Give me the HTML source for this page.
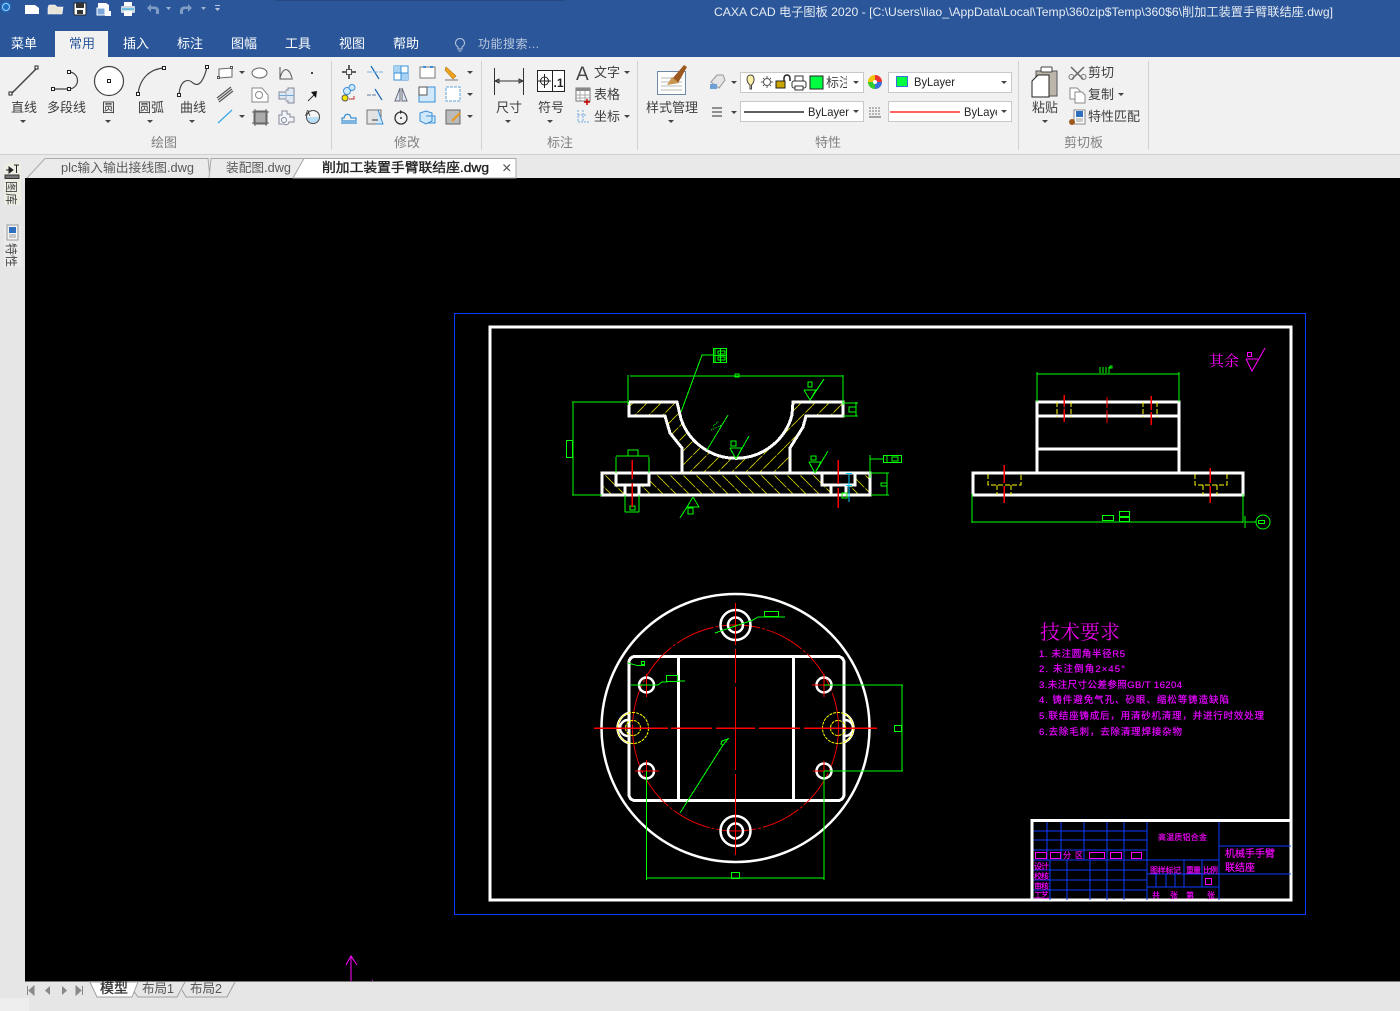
<!DOCTYPE html>
<html lang="zh"><head><meta charset="utf-8"><title>CAXA CAD</title>
<style>
html,body{margin:0;padding:0;width:1400px;height:1011px;overflow:hidden;background:#e6e6e6}
svg{display:block}
text{font-family:"Liberation Sans","Noto Sans CJK SC",sans-serif}
.r{font-size:13px;fill:#3e3e3e}
.g{font-size:13px;fill:#808080}
.m{font-size:13px;fill:#fff}
.t{font-size:12.5px;fill:#5a5a5a}
.w{fill:none;stroke:#fff;stroke-width:3;shape-rendering:crispEdges}
.gr{fill:none;stroke:#0f0;stroke-width:1;shape-rendering:crispEdges}
.red{fill:none;stroke:#f00;stroke-width:1.5;shape-rendering:crispEdges}
.y{fill:none;stroke:#ff0;stroke-width:1;stroke-dasharray:5 2;shape-rendering:crispEdges}
.mg{fill:#f0f;font-size:8px;stroke:#e000f0;stroke-width:.2}
.mt{fill:#f0f;font-size:9.5px;stroke:#c000f0;stroke-width:.25}
.mb{fill:none;stroke:#f0f;stroke-width:1.2;shape-rendering:crispEdges}
.bl{stroke:#0a3cff;stroke-width:1;fill:none;shape-rendering:crispEdges}
.ic{fill:none;stroke:#555;stroke-width:1}
.ib{fill:none;stroke:#3a8fd6;stroke-width:1.2}
</style></head><body>
<svg width="1400" height="1011" viewBox="0 0 1400 1011" xmlns="http://www.w3.org/2000/svg">
<defs>
<path id="d" d="M-3 0H3L0 3Z" fill="#444"/>
<pattern id="h1" width="14" height="14" patternUnits="userSpaceOnUse"><path d="M0 14L14 0" stroke="#d8d800" stroke-width=".8" stroke-dasharray="9 1.500"/></pattern>
<pattern id="h2" width="13" height="13" patternUnits="userSpaceOnUse"><path d="M0 0L13 13" stroke="#d8d800" stroke-width=".8" stroke-dasharray="9 1.500"/></pattern>
</defs>
<!-- backgrounds -->
<rect width="1400" height="1011" fill="#e6e6e6"/>
<rect width="1400" height="57" fill="#2b579a"/>
<rect x="275" width="290" height="1" fill="#24487f"/>
<rect y="57" width="1400" height="98" fill="#f1f1f1"/>
<rect y="154" width="1400" height="1" fill="#d0d0d0"/>
<rect y="155" width="1400" height="23" fill="#e9e9e9"/>
<rect x="25" y="178" width="1375" height="803" fill="#000"/>
<rect x="25" y="981" width="1375" height="1" fill="#777"/>
<rect x="0" y="998" width="29" height="13" fill="#eee"/>
<!-- quick access -->
<path d="M1 4l5-3 5 3-1 6-5 3-4-3z" fill="#1f6fc0"/><circle cx="6" cy="7" r="3.500" fill="none" stroke="#9fd0ff"/>
<path d="M25 5h10l4 3v6H25z" fill="#fff"/>
<path d="M48 8l1-3h6l2 2h6l-1 7H48z" fill="#e8e4d8" stroke="#fff" stroke-width=".6"/>
<rect x="74" y="3" width="12" height="12" rx="1" fill="#fff" stroke="#222"/><rect x="76" y="3" width="8" height="5" fill="#333"/><rect x="77" y="10" width="6" height="4" fill="#333"/>
<path d="M98 3h8l3 2v6H98z" fill="#fff"/><rect x="97" y="8" width="8" height="7" fill="#7da7d8" stroke="#fff"/><rect x="105" y="11" width="6" height="5" fill="#fff"/>
<rect x="124" y="2" width="8" height="5" fill="#fff"/><rect x="121" y="6" width="14" height="7" rx="1" fill="#cfd8e2"/><rect x="124" y="11" width="8" height="5" fill="#fff"/><rect x="122" y="8" width="12" height="2" fill="#6cc0e0"/>
<path d="M147 8l4-4v2.500h4a4 4 0 0 1 4 4V14h-3v-3a2 2 0 0 0-2-2h-3v3z" fill="#7f9cc5"/>
<path d="M166 7h5l-2.500 3z" fill="#9db3d3"/>
<path d="M192 8l-4-4v2.500h-4a4 4 0 0 0-4 4V14h3v-3a2 2 0 0 1 2-2h3v3z" fill="#7f9cc5"/>
<path d="M201 7h5l-2.500 3z" fill="#9db3d3"/>
<path d="M215 5h5v1h-5zM215 8h5l-2.500 3z" fill="#b9c7dd"/>
<text x="714" y="16" font-size="12" fill="#e6ebf3" textLength="619" lengthAdjust="spacingAndGlyphs">CAXA CAD 电子图板 2020 - [C:\Users\liao_\AppData\Local\Temp\360zip$Temp\360$6\削加工装置手臂联结座.dwg]</text>
<!-- menu tabs -->
<rect x="55" y="31" width="53" height="26" fill="#f1f1f1"/>
<text class="m" x="11" y="48">菜单</text>
<text class="m" x="69" y="48" style="fill:#2b579a">常用</text>
<text class="m" x="123" y="48">插入</text>
<text class="m" x="177" y="48">标注</text>
<text class="m" x="231" y="48">图幅</text>
<text class="m" x="285" y="48">工具</text>
<text class="m" x="339" y="48">视图</text>
<text class="m" x="393" y="48">帮助</text>
<path d="M458 47a4.500 4.500 0 1 1 4 0v2h-4zM458.500 51h3" fill="none" stroke="#b9c7dd"/>
<text x="478" y="48" font-size="12" fill="#b9c7dd" textLength="61">功能搜索...</text>
<!-- separators -->
<path d="M331.500 61V150M481.500 61V150M637.500 61V150M1018.500 61V150M1148.500 61V150" stroke="#d2d2d2"/>
<!-- big draw icons -->
<path d="M11 94L37 68" stroke="#444" stroke-width="1.500"/>
<g fill="#fff" stroke="#222"><rect x="9" y="92" width="3" height="3"/><rect x="35" y="66" width="3" height="3"/></g>
<path d="M53 89H69A8.500 8.500 0 0 0 69 72" fill="none" stroke="#444" stroke-width="1.200"/>
<g fill="#fff" stroke="#222"><rect x="51.500" y="87.500" width="3" height="3"/><rect x="67.500" y="87.500" width="3" height="3"/><rect x="67.500" y="70.500" width="3" height="3"/></g>
<circle cx="109" cy="81" r="14.500" fill="#fff" stroke="#444" stroke-width="1.200"/><rect x="107.500" y="79.500" width="3" height="3" fill="#fff" stroke="#222"/>
<path d="M138 94C140 78 150 69 164 68" fill="none" stroke="#444" stroke-width="1.200"/>
<g fill="#fff" stroke="#222"><rect x="136.500" y="92.500" width="3" height="3"/><rect x="162.500" y="66.500" width="3" height="3"/></g>
<path d="M179 95C180 80 188 78 193 83C199 88 204 80 207 67" fill="none" stroke="#444" stroke-width="1.200"/>
<g fill="#fff" stroke="#222"><rect x="177.500" y="93.500" width="3" height="3"/><rect x="205.500" y="65.500" width="3" height="3"/></g>
<text class="r" x="11" y="112">直线</text><text class="r" x="47" y="112">多段线</text><text class="r" x="102" y="112">圆</text><text class="r" x="138" y="112">圆弧</text><text class="r" x="180" y="112">曲线</text>
<use href="#d" x="23" y="120"/><use href="#d" x="108" y="120"/><use href="#d" x="150" y="120"/><use href="#d" x="192" y="120"/>
<!-- small draw tools -->
<path d="M219 69L232 68V77L219 78Z" fill="#fff" stroke="#666"/><rect x="217.500" y="76.500" width="2" height="2" fill="#fff" stroke="#555"/><rect x="230.500" y="66.500" width="2" height="2" fill="#fff" stroke="#555"/>
<use href="#d" x="242" y="71"/>
<ellipse cx="259.500" cy="73" rx="7.500" ry="5" fill="#fff" stroke="#666"/>
<path d="M280 67V79H293M280 78C284 64 290 70 292 78" class="ic"/>
<rect x="311" y="72" width="2" height="2" fill="#444"/>
<path d="M218 100L232 89M219 102L233 91M217 98L231 87" stroke="#555" stroke-width="1.200" fill="none"/>
<path d="M252 88H262L268 95V102H252Z" fill="#fff" stroke="#888"/><circle cx="259" cy="95" r="3.500" fill="none" stroke="#888"/>
<path d="M279 92H286V90H288V88H294V103H288V101H286V99H279Z" fill="#dfe9f3" stroke="#889"/><path d="M279 95.500H294" stroke="#6ea8da"/><path d="M286 90V101" stroke="#aab"/>
<path d="M308 101L314 95" stroke="#333"/><path d="M311 92L317 91L316 98Z" fill="#111"/>
<path d="M218 123L232 110" stroke="#39a9e8" stroke-width="1.200"/><use href="#d" x="242" y="115"/>
<rect x="254" y="111" width="13" height="13" fill="#aaa" stroke="#666"/><path d="M252 112H269M252 123H269M255 109V126M266 109V126" stroke="#666"/>
<path d="M279 115h3v-4h5v3h3v3h4v5h-5a3 3 0 0 1-5 2h-5z" fill="#f1f5f9" stroke="#889"/><circle cx="284" cy="120" r="2.500" fill="none" stroke="#889"/>
<circle cx="313" cy="117" r="6.500" fill="#f6f6f6" stroke="#555"/><path d="M313 117H319.500A6.500 6.500 0 0 1 306.500 117Z" fill="#b8def8"/><circle cx="313" cy="117" r="6.500" fill="none" stroke="#555"/><text x="305" y="116" font-size="8" fill="#333">A</text>
<!-- modify tools -->
<g class="ic"><rect x="346.500" y="69.500" width="5" height="5"/><path d="M349 65V69M349 75V79M342 72H346M352 72H356" stroke="#333" stroke-width="1.500"/></g>
<path d="M371 66L379 79" stroke="#1c6bb5" stroke-width="1.200"/><path d="M367 72H383" stroke="#7ab3e0" stroke-dasharray="5 1"/>
<rect x="394" y="66" width="14" height="14" fill="#fff" stroke="#3a8fd6"/><rect x="394" y="66" width="7" height="7" fill="#a6d3f3"/><rect x="401" y="73" width="7" height="7" fill="#a6d3f3"/><path d="M401 66V80M394 73H408" stroke="#3a8fd6"/>
<rect x="420" y="67" width="15" height="11" fill="#fff" stroke="#777"/><path d="M423 67h3M430 67h3" stroke="#3a8fd6" stroke-width="2"/>
<path d="M446 67L456 76L453 79L445 70Z" fill="#f2a51c" stroke="#b8750a" stroke-width=".6"/><path d="M445 80H458" stroke="#777"/>
<use href="#d" x="470" y="71"/>
<circle cx="347" cy="91" r="3.500" fill="#cfe8fb" stroke="#3a8fd6"/><circle cx="352" cy="87.500" r="3" fill="#cfe8fb" stroke="#3a8fd6"/><circle cx="345" cy="98" r="3" fill="#f5e600" stroke="#555"/><path d="M349 99H354V96" fill="none" stroke="#b33"/>
<path d="M367 95H376" stroke="#5a7ca0" stroke-dasharray="4 1"/><path d="M375 89L382 100" stroke="#1c6bb5" stroke-width="1.200"/>
<path d="M400 88L395 101H400ZM402 88L407 101H402Z" fill="#dde8f2" stroke="#667"/>
<rect x="419" y="87" width="16" height="15" fill="#cfe8fb" stroke="#3a8fd6"/><rect x="419" y="87" width="8" height="8" fill="#fff" stroke="#555"/>
<rect x="446" y="87" width="14" height="14" fill="#fff" stroke="#5fa6de" stroke-dasharray="3 1"/><use href="#d" x="470" y="93"/>
<path d="M342 121H356V118H351C350 113 345 113 344 118H342ZM341 123H357" class="ib"/>
<rect x="367" y="110" width="14" height="14" fill="#e3e3e3" stroke="#777"/><path d="M378 110L383 124H376" fill="#cfe8fb" stroke="#3a8fd6"/><path d="M372 120h6" stroke="#333"/>
<circle cx="401" cy="118" r="6" fill="none" stroke="#333" stroke-width="1.300"/><circle cx="401" cy="118" r="1" fill="#333"/><path d="M400 110l3 2-3 2z" fill="#333"/>
<path d="M420 113L426 111L432 113V121L426 124L420 121ZM426 116L435 116V123H428" fill="#cfe8fb" stroke="#3a8fd6"/>
<rect x="446" y="110" width="14" height="14" fill="#bbb" stroke="#666"/><path d="M452 121L460 113" stroke="#e89a1c" stroke-width="2"/><use href="#d" x="470" y="115"/>
<text class="g" x="151" y="147">绘图</text><text class="g" x="394" y="147">修改</text><text class="g" x="547" y="147">标注</text><text class="g" x="815" y="147">特性</text><text class="g" x="1064" y="147">剪切板</text>
<!-- annotate -->
<path d="M494.500 68V95M523.500 68V95M495 81H523M495 81l4-2v4zM523 81l-4-2v4z" stroke="#333" fill="none"/>
<text class="r" x="496" y="112">尺寸</text><use href="#d" x="508" y="120"/>
<rect x="537.500" y="70.500" width="27" height="21" fill="#fff" stroke="#222"/><path d="M552.500 71V91" stroke="#222"/><circle cx="544.500" cy="81" r="4" fill="none" stroke="#222"/><path d="M538 81H551M544.500 74V88" stroke="#222"/><text x="553.500" y="87" font-size="12" font-weight="bold" fill="#222">.1</text>
<text class="r" x="538" y="112">符号</text><use href="#d" x="550" y="120"/>
<text x="576" y="80" font-size="19" fill="#444">A</text><text class="r" x="594" y="77">文字</text><use href="#d" x="627" y="71"/>
<rect x="576" y="88" width="14" height="13" fill="#fff" stroke="#777"/><rect x="576" y="88" width="14" height="3" fill="#888"/><path d="M580 91V101M585 91V101M576 95H590M576 98H590" stroke="#aaa"/><path d="M587 99V105M584 102H590" stroke="#c00" stroke-width="1.500"/>
<text class="r" x="594" y="99">表格</text>
<path d="M578 110V122H589M578 115H586M583 110V122" stroke="#6ea8da" stroke-dasharray="2 1" fill="none"/>
<text class="r" x="594" y="121">坐标</text><use href="#d" x="627" y="115"/>
<!-- style -->
<rect x="657.500" y="71.500" width="28" height="23" fill="#fdfdfd" stroke="#6d89a8"/>
<path d="M661 78H682M661 82H682M661 86H682M661 90H682" stroke="#bbb"/>
<path d="M672 79L684 65L687 67L678 83Z" fill="#9c5a22"/><path d="M667 85L672 77L679 83Z" fill="#c8964f"/>
<text class="r" x="646" y="112">样式管理</text><use href="#d" x="671" y="120"/>
<!-- props -->
<path d="M711 82L717 75H723L725 80L719 88Z" fill="#e5e5e5" stroke="#999"/><rect x="710" y="84" width="7" height="5" fill="#6ea0d8"/><use href="#d" x="734" y="81"/>
<path d="M712 108H722M712 112H722M712 116H722" stroke="#555" stroke-width="1.200"/><use href="#d" x="734" y="111"/>
<rect x="740.500" y="72.500" width="123" height="20" fill="#fff" stroke="#c8c8c8"/>
<rect x="888.500" y="72.500" width="123" height="20" fill="#fff" stroke="#c8c8c8"/>
<rect x="740.500" y="101.500" width="123" height="20" fill="#fff" stroke="#c8c8c8"/>
<rect x="888.500" y="101.500" width="123" height="20" fill="#fff" stroke="#c8c8c8"/>
<path d="M750 89V85C746 82 746 75 750.500 75C755 75 755 82 751.500 85V89Z" fill="#fdf1a8" stroke="#444"/>
<circle cx="767" cy="82" r="3.500" fill="#fff" stroke="#555"/><path d="M767 76V78M767 86V88M761 82H763M771 82H773M763 78L764 79M770 85L771 86M771 78L770 79M764 85L763 86" stroke="#555"/>
<rect x="776" y="81" width="9" height="7" fill="#c8a400" stroke="#222"/><path d="M784 81V78A3 3 0 0 1 790 78V81" fill="none" stroke="#222" stroke-width="1.500"/>
<rect x="792" y="81" width="14" height="7" rx="2" fill="#fff" stroke="#333"/><rect x="795" y="76" width="8" height="5" fill="#fff" stroke="#333"/><rect x="795" y="86" width="8" height="4" fill="#fff" stroke="#333"/>
<rect x="810" y="76" width="13" height="13" fill="#00ff40" stroke="#222"/>
<svg x="826" y="72" width="21" height="20"><text class="r" x="0" y="15">标注</text></svg>
<use href="#d" x="856" y="81"/>
<circle cx="875" cy="82" r="7" fill="#f5c400"/><path d="M875 82V75A7 7 0 0 1 882 82Z" fill="#e33"/><path d="M875 82H882A7 7 0 0 1 875 89Z" fill="#3a6fe0"/><path d="M875 82V89A7 7 0 0 1 868 82Z" fill="#3c3"/><circle cx="875" cy="82" r="2" fill="#fff"/>
<rect x="896.500" y="76.500" width="11" height="10" fill="#00ff40" stroke="#3a6fe0"/>
<text x="914" y="86" font-size="12" fill="#222" textLength="41" lengthAdjust="spacingAndGlyphs">ByLayer</text><use href="#d" x="1004" y="81"/>
<path d="M744 112H804" stroke="#000" stroke-width="1.200"/>
<text x="808" y="116" font-size="12" fill="#222" textLength="41" lengthAdjust="spacingAndGlyphs">ByLayer</text><use href="#d" x="856" y="110"/>
<path d="M869 108H881M869 111H881M869 114H881" stroke="#777" stroke-dasharray="2 1"/><path d="M869 117H881" stroke="#555"/>
<path d="M890 112H960" stroke="#f00" stroke-width="1.200"/>
<svg x="964" y="102" width="33" height="19"><text x="0" y="14" font-size="12" fill="#222" textLength="41" lengthAdjust="spacingAndGlyphs">ByLayer</text></svg>
<use href="#d" x="1004" y="110"/>
<!-- clipboard -->
<rect x="1036" y="71" width="21" height="25" fill="#bcb6aa" stroke="#555"/><rect x="1041" y="67" width="11" height="5" rx="1" fill="#fff" stroke="#444"/>
<path d="M1032 81L1038 75H1049V97H1032Z" fill="#fff" stroke="#222"/>
<text class="r" x="1032" y="112">粘贴</text><use href="#d" x="1045" y="120"/>
<path d="M1071 67L1083 79M1084 67L1072 79" stroke="#666" stroke-width="1.500"/><circle cx="1071.500" cy="77" r="2.500" fill="none" stroke="#777"/><circle cx="1083.500" cy="77" r="2.500" fill="none" stroke="#777"/>
<text class="r" x="1088" y="77">剪切</text>
<path d="M1070 88H1077L1080 91V99H1070Z" fill="#fff" stroke="#888"/><path d="M1075 92H1082L1085 95V103H1075Z" fill="#fff" stroke="#888"/>
<text class="r" x="1088" y="99">复制</text><use href="#d" x="1121" y="93"/>
<rect x="1074" y="110" width="11" height="14" fill="#fff" stroke="#888"/><rect x="1076" y="111" width="7" height="6" fill="#2f6fc0"/><path d="M1076 119h7M1076 121h7" stroke="#999"/><circle cx="1072" cy="122" r="3" fill="#9c5a22"/>
<text class="r" x="1088" y="121">特性匹配</text>
<!-- doc tabs -->
<path d="M27 178L45 158.500H208L210 178" fill="#ebebeb" stroke="#aaa"/>
<path d="M209 178L211 158.500H304L293 178" fill="#ebebeb" stroke="#aaa"/>
<path d="M293 178L304 158.500H516V178Z" fill="#fff" stroke="#aaa"/>
<text class="t" x="61" y="172" textLength="133" lengthAdjust="spacingAndGlyphs">plc输入输出接线图.dwg</text>
<text class="t" x="226" y="172" textLength="65" lengthAdjust="spacingAndGlyphs">装配图.dwg</text>
<text x="322" y="172" font-size="13" fill="#222" stroke="#222" stroke-width=".35" textLength="167" lengthAdjust="spacingAndGlyphs">削加工装置手臂联结座.dwg</text>
<path d="M503.500 164.500L510 171M510 164.500L503.500 171" stroke="#555" stroke-width="1.200"/>
<!-- left panel -->
<rect x="4" y="163" width="17" height="42" fill="#eeeee4"/>
<rect x="4" y="225" width="17" height="42" fill="#ececec"/>
<path d="M6 170H10M9 167L13 170L9 173ZM14 165H19M16.500 165V173" stroke="#222" fill="#222"/><rect x="5" y="175" width="14" height="3.500" fill="#777" stroke="#333"/>
<text x="0" y="0" font-size="12" fill="#444" transform="translate(7 181) rotate(90)">图库</text>
<rect x="7" y="225" width="11" height="15" fill="#f5f5f5" stroke="#999"/><rect x="9" y="227" width="7" height="6" fill="#2f6fc0"/><path d="M9 235h7M9 237h7" stroke="#999"/>
<text x="0" y="0" font-size="12" fill="#444" transform="translate(7 243) rotate(90)">特性</text>
<!-- bottom tabs -->
<path d="M27.500 986V995M34 986V995L29 990.500Z" fill="#888" stroke="#888"/>
<path d="M50 986V995L45 990.500Z" fill="#888"/><path d="M62 986V995L67 990.500Z" fill="#888"/>
<path d="M76 986V995L81 990.500ZM82.500 986V995" fill="#888" stroke="#888"/>
<path d="M138 982L133 990L138 997H177L185 982" fill="none" stroke="#a0a0a0"/>
<path d="M182 990L186 997H227L235 982" fill="none" stroke="#a0a0a0"/>
<path d="M90 982H138L132 997H97Z" fill="#fff" stroke="#a0a0a0"/>
<text x="100" y="993" font-size="14" fill="#333" stroke="#333" stroke-width=".3">模型</text>
<text x="142" y="993" font-size="13" fill="#555" textLength="32" lengthAdjust="spacingAndGlyphs">布局1</text>
<text x="190" y="993" font-size="13" fill="#555" textLength="32" lengthAdjust="spacingAndGlyphs">布局2</text>
<path d="M351 981V956M346 965L351 956L357 965" fill="none" stroke="#f0f" stroke-width="1"/><rect x="372" y="980" width="1" height="1" fill="#f0f"/>
<!-- drawing frame -->
<rect x="454.500" y="313.500" width="851" height="601" stroke="#0a3cff" stroke-width="1" fill="none"/>
<rect x="490" y="327" width="801" height="573" class="w"/>
<!-- FRONT VIEW -->
<path d="M629 402H677L681 419A58 58 0 0 0 792 415L793 402H843V416H806L803 427L790 448V473H682V448L670 433L665 416H629Z" fill="url(#h1)"/>
<rect x="602" y="473" width="268" height="22" fill="url(#h2)"/>
<path d="M616 473V485H625V495H639V485H649V473ZM822 473V485H831V495H846V485H855V473Z" fill="#000"/>
<path d="M629 402H677L681 419A58 58 0 0 0 792 415L793 402H843V416H806L803 427L790 448V473M682 473V448L670 433L665 416H629V402" class="w"/>
<path d="M602 473H870V495H602ZM616 473V485H649V473M625 485V495M639 485V495M822 473V485H855V473M831 485V495M846 485V495" class="w"/>
<path d="M628 405V375M843 405V375M630 376H843M735 374h4v3h-4z" class="gr"/>
<path d="M681 412L702 355H713M713.500 348.500h13v14h-13zM720.500 348.500v14M713.500 355.500h13M718 351h7v3h-7zM718 357h7v3h-7zM715 349v13" class="gr"/>
<path d="M572 402H628M573 402V495M572 495H602M566.500 440.500h6v17h-6z" class="gr"/>
<path d="M804 390H816L810 400M804 390L810 400L824 379M808 382h4v5h-4z" class="gr"/>
<path d="M730 448H742L736 459L749 436M730 448L736 459M731 441h5v5h-5z" class="gr"/>
<path d="M809 462H821L815 473L828 451M809 462L815 473M811 456h5v4h-5z" class="gr"/>
<path d="M687 507H699L693 497M687 507L693 497M687 507L680 518M688 508h5v6h-5z" class="gr"/>
<path d="M843 403H858M843 416H858M856 402V416M849 407h7v5h-7z" class="gr"/>
<path d="M870 455V478M870 459H883M883.500 455.500h18v7h-18zM887 456v6M892 457h6v4h-6zM871 473H889M871 495H889M887 473V495M881 483h6v3h-6z" class="gr"/>
<path d="M616 457V473M649 457V473M616 456H649M628 450h10v6h-10z" class="gr"/>
<path d="M625 495V512M639 495V512M625 512H639M630 506h5v4h-5z" class="gr"/>
<path d="M707 450L728 415" class="gr"/>
<path d="M711 430L722 425M713 426L719 421" class="gr" style="stroke-dasharray:1 1"/>
<rect x="842" y="493" width="5" height="5" class="gr"/>
<path d="M632 460V479M632 483V507M838 460V484M838 488V508" class="red"/>
<path d="M849 473V502M846 473.500H852M846 485.500H852" stroke="#0cf" fill="none"/>
<!-- SIDE VIEW -->
<path d="M1037 473V402H1179V473M1037 416H1179M1037 449H1179" class="w"/>
<path d="M973 473H1243V495H973Z" class="w"/>
<path d="M1037 372V402M1179 372V402M1037 374H1179M1100 367v6M1103 367v6M1106 367v6M1109 367v6M1110 366h2v2h-2z" class="gr"/>
<path d="M1057 402V417M1071 402V417M1143 402V417M1157 402V417" class="y"/>
<path d="M988 474V485H1021V474M997 485V495M1011 485V495M1195 474V485H1227V474M1203 485V495M1217 485V495" class="y"/>
<path d="M1064 395V407M1064 409V422M1151 396V410M1151 412V425M1004 465V483M1004 486V503M1210 468V483M1210 486V503" class="red"/>
<path d="M1107 397V408M1107 410V423" class="red" style="stroke-width:1"/>
<path d="M972 494V523M1243 494V523M972 522H1243M1102.500 515.500h11v5h-11zM1119.500 511.500h10v5h-10zM1119.500 517.500h10v4h-10zM1245 516V528M1245 522H1256M1258.500 520.500h6v3h-6z" class="gr"/>
<circle cx="1263" cy="522" r="7" fill="none" stroke="#0f0"/>
<!-- roughness -->
<text x="1209" y="366" font-size="15" fill="#f0f" style="font-family:'Noto Serif CJK SC',serif">其余</text>
<path d="M1246 359H1258M1246 359L1252 371L1265 348" fill="none" stroke="#f0f"/>
<rect x="1247.500" y="352.500" width="4" height="4" fill="none" stroke="#f0f"/>
<!-- TOP VIEW -->
<circle cx="735.500" cy="728" r="134" fill="none" stroke="#fff" stroke-width="2.500"/>
<rect x="629" y="656.500" width="215" height="144" rx="6" class="w"/>
<path d="M678.500 657V800M793.500 657V800" class="w"/>
<circle cx="735.500" cy="728" r="103" fill="none" stroke="#f00" stroke-width=".9" stroke-dasharray="40 2 3 2"/>
<g fill="none" stroke="#fff" stroke-width="2.500">
<circle cx="735.500" cy="625" r="15"/><circle cx="735.500" cy="625" r="7.500"/>
<circle cx="735.500" cy="831" r="15"/><circle cx="735.500" cy="831" r="7.500"/>
<circle cx="646.500" cy="685" r="7.500"/><circle cx="824" cy="685" r="7.500"/>
<circle cx="646.500" cy="771" r="7.500"/><circle cx="824" cy="771" r="7.500"/>
<path d="M628 713A16 16 0 0 0 628 743M628 720A8 8 0 0 0 628 736"/>
<path d="M843 713A16 16 0 0 1 843 743M845 720A8 8 0 0 1 845 736"/>
</g>
<g fill="none" stroke="#ff0" stroke-dasharray="3 1"><circle cx="633" cy="728" r="15.500"/><circle cx="633" cy="728" r="7.500"/><circle cx="838" cy="728" r="15.500"/><circle cx="838" cy="728" r="7.500"/></g>
<path d="M594 728H668M671 728H712M716 728H755M759 728H800M804 728H877" class="red"/>
<path d="M735.500 603V645M735.500 649V683M735.500 687V770M735.500 774V855M635 685H658M646.500 674V697M812 685H836M824 674V697M635 771H659M646.500 760V782M813 771H836M824 761V783" class="red" style="stroke-width:1"/>
<path d="M646.500 771V880M824 771V880M646.500 878H824M731.500 872.500h8v6h-8z" class="gr"/>
<path d="M824 685H903M824 771H903M902 685V771M894.500 725.500h7v6h-7z" class="gr"/>
<path d="M631 685H658L662 682L685 681M666.500 675.500h11v6h-11z" class="gr"/>
<path d="M715 633L753 620L758 617H785M764.500 611.500h14v5h-14z" class="gr"/>
<path d="M628 663L637 665.500H645M641.500 661.500h3v3h-3z" class="gr"/>
<path d="M680 813L723 745L728 739L722 741L721 744L723 745" class="gr"/>
<!-- TECH REQS -->
<text x="1040" y="639" font-size="20" fill="#e800e8" style="font-family:'Noto Serif CJK SC',serif" textLength="80">技术要求</text>
<text class="mt" x="1039" y="657" textLength="86">1.  未注圆角半径R5</text>
<text class="mt" x="1039" y="672" textLength="86">2.  未注倒角2×45°</text>
<text class="mt" x="1039" y="688" textLength="143">3.未注尺寸公差参照GB/T 16204</text>
<text class="mt" x="1039" y="703" textLength="190">4.  铸件避免气孔、砂眼、缩松等铸造缺陷</text>
<text class="mt" x="1039" y="719" textLength="225">5.联结座铸成后，用清砂机清理，并进行时效处理</text>
<text class="mt" x="1039" y="735" textLength="143">6.去除毛刺，去除清理焊接杂物</text>
<!-- TITLE BLOCK -->
<path d="M1047 821V860M1061 821V860M1084 821V860M1107 821V900M1124 821V900M1147 821V900M1219 821V900
M1033 831H1147M1033 840H1147M1033 850H1147M1033 860H1219M1033 870H1147M1033 880H1147M1033 890H1147
M1050 860V900M1067 860V900M1090 860V900
M1147 874H1291M1147 887H1219M1184 860V887M1202 860V887M1156 874V887M1166 874V887M1175 874V887M1219 846H1291" class="bl"/>
<path d="M1032 900V820.500H1291" class="w"/>
<path d="M1035.500 852.500h11v6h-11zM1050.500 852.500h10v6h-10zM1089.500 852.500h15v6h-15zM1110.500 852.500h11v6h-11zM1131.500 852.500h10v6h-10zM1205.500 878.500h6v6h-6z" class="mb"/>
<text class="mg" x="1158" y="840" textLength="49">高温质铝合金</text>
<text class="mg" x="1225" y="857" style="font-size:10px" textLength="50">机械手手臂</text>
<text class="mg" x="1225" y="871" style="font-size:10px" textLength="30">联结座</text>
<text class="mg" x="1063" y="858" textLength="20">分 区</text>
<text class="mg" x="1034" y="869" textLength="15">设计</text>
<text class="mg" x="1034" y="879" textLength="15">校核</text>
<text class="mg" x="1034" y="889" textLength="15">审核</text>
<text class="mg" x="1034" y="898" textLength="15">工艺</text>
<text class="mg" x="1150" y="873" textLength="31">图样标记</text>
<text class="mg" x="1186" y="873" textLength="15">重量</text>
<text class="mg" x="1203" y="873" textLength="15">比例</text>
<text class="mg" x="1152" y="898">共</text><text class="mg" x="1170" y="898">张</text><text class="mg" x="1186" y="898">第</text><text class="mg" x="1207" y="898">张</text>
</svg>
</body></html>
